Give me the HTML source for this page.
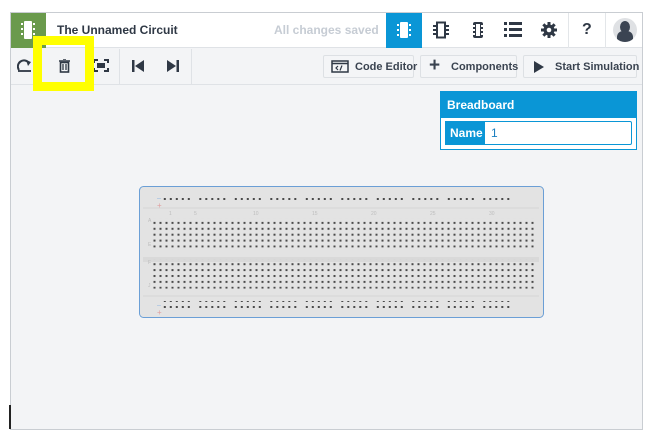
<!DOCTYPE html>
<html><head><style>
*{margin:0;padding:0;box-sizing:border-box}
body{width:655px;height:440px;background:#fff;position:relative;overflow:hidden;font-family:"Liberation Sans",sans-serif}
.abs{position:absolute;white-space:nowrap}
.btn{position:absolute;top:55px;height:23px;border:1px solid #dde0e4;border-radius:2px;background:#f4f5f7;font-size:11px;font-weight:bold;color:#3a4350;line-height:21px;white-space:nowrap}
</style></head><body>
<div class="abs" style="left:10px;top:12px;width:633px;height:418px;border:1px solid #c9cdd2;background:#f3f4f6"></div>
<div class="abs" style="left:11px;top:13px;width:631px;height:35px;background:#fff;border-bottom:1px solid #dfe2e6"></div>
<div class="abs" style="left:11px;top:13px;width:35px;height:35px;background:#6a9a4c"></div>
<svg class="abs" style="left:21px;top:20px" width="14" height="20"><rect x="3" y="1" width="8" height="18" rx="1" fill="#fff"/><g fill="#fff"><rect x="0" y="3" width="2" height="2"/><rect x="0" y="8" width="2" height="2"/><rect x="0" y="13" width="2" height="2"/><rect x="12" y="3" width="2" height="2"/><rect x="12" y="8" width="2" height="2"/><rect x="12" y="13" width="2" height="2"/></g></svg>
<div class="abs" style="left:57px;top:23px;font-size:12px;font-weight:bold;color:#2f3845">The Unnamed Circuit</div>
<div class="abs" style="left:274px;top:23px;font-size:12px;font-weight:bold;color:#c6ccd4">All changes saved</div>
<div class="abs" style="left:386px;top:13px;width:36px;height:35px;background:#0a96d6"></div>
<svg class="abs" style="left:397px;top:21px" width="14" height="18"><rect x="3" y="1" width="8" height="16" rx="1" fill="#fff"/><g fill="#fff"><rect x="0" y="3" width="2" height="2"/><rect x="0" y="8" width="2" height="2"/><rect x="0" y="13" width="2" height="2"/><rect x="12" y="3" width="2" height="2"/><rect x="12" y="8" width="2" height="2"/><rect x="12" y="13" width="2" height="2"/></g></svg>
<svg class="abs" style="left:433px;top:21px" width="16" height="18"><rect x="4" y="1.5" width="8" height="15" fill="none" stroke="#2f3845" stroke-width="2"/><g stroke="#2f3845" stroke-width="2"><path d="M0 5h4M0 9h4M0 13h4M12 5h4M12 9h4M12 13h4"/></g></svg>
<svg class="abs" style="left:470px;top:21px" width="16" height="18"><rect x="3" y="1" width="10" height="16" rx="2" fill="#2f3845"/><g fill="#fff"><rect x="3" y="4" width="2" height="2"/><rect x="3" y="8" width="2" height="2"/><rect x="3" y="12" width="2" height="2"/><rect x="11" y="4" width="2" height="2"/><rect x="11" y="8" width="2" height="2"/><rect x="11" y="12" width="2" height="2"/></g><rect x="6" y="3" width="4" height="12" fill="#fff"/></svg>
<svg class="abs" style="left:504px;top:22px" width="18" height="15" fill="#2f3845"><rect x="0" y="0" width="3" height="3"/><rect x="5" y="0" width="13" height="3"/><rect x="0" y="6" width="3" height="3"/><rect x="5" y="6" width="13" height="3"/><rect x="0" y="12" width="3" height="3"/><rect x="5" y="12" width="13" height="3"/></svg>
<svg class="abs" style="left:541px;top:22px" width="16" height="16" viewBox="0 0 16 16"><g fill="#2f3845"><circle cx="8" cy="8" r="5.5"/><rect x="6.5" y="0" width="3" height="16"/><rect x="0" y="6.5" width="16" height="3"/><rect x="6.5" y="0" width="3" height="16" transform="rotate(45 8 8)"/><rect x="6.5" y="0" width="3" height="16" transform="rotate(-45 8 8)"/></g><circle cx="8" cy="8" r="2.3" fill="#fff"/></svg>
<div class="abs" style="left:568px;top:13px;width:1px;height:35px;background:#e3e6e9"></div>
<div class="abs" style="left:582px;top:21px;font-size:16px;font-weight:bold;color:#2f3845">?</div>
<div class="abs" style="left:605px;top:13px;width:1px;height:35px;background:#e3e6e9"></div>
<div class="abs" style="left:613px;top:18px;width:24px;height:24px;border-radius:50%;background:#dfe1e4;overflow:hidden"><div class="abs" style="left:7px;top:3px;width:10px;height:12px;border-radius:50%;background:#3b4452"></div><div class="abs" style="left:4px;top:13px;width:16px;height:14px;border-radius:6px 6px 0 0;background:#3b4452"></div></div>
<div class="abs" style="left:11px;top:84px;width:631px;height:1px;background:#dfe2e6"></div>
<div class="abs" style="left:119px;top:49px;width:1px;height:35px;background:#dfe2e6"></div>
<div class="abs" style="left:191px;top:49px;width:1px;height:35px;background:#dfe2e6"></div>
<svg class="abs" style="left:17px;top:59px" width="15" height="13"><path d="M2 11A6 6 0 0 1 12 4" fill="none" stroke="#2f3845" stroke-width="2"/><path d="M9 1l5 2-3 4z" fill="#2f3845"/><path d="M1 12h13" stroke="#2f3845" stroke-width="1.8"/></svg>
<svg class="abs" style="left:59px;top:59px" width="11" height="14"><path d="M0 2h11M4 0h3" stroke="#2f3845" stroke-width="1.6"/><rect x="1.5" y="3.5" width="8" height="9.5" fill="none" stroke="#2f3845" stroke-width="1.6"/><path d="M4 5v6M7 5v6" stroke="#2f3845" stroke-width="1.3"/></svg>
<svg class="abs" style="left:93px;top:59px" width="16" height="13"><path d="M1 4V1h4M11 1h4v3M15 9v3h-4M5 12H1V9" fill="none" stroke="#2f3845" stroke-width="2"/><rect x="4" y="4" width="8" height="5" fill="#2f3845"/></svg>
<svg class="abs" style="left:132px;top:60px" width="12" height="12" fill="#2f3845"><rect x="0" y="0" width="2.5" height="12"/><path d="M12 0v12L3 6z"/></svg>
<svg class="abs" style="left:167px;top:60px" width="12" height="12" fill="#2f3845"><rect x="9.5" y="0" width="2.5" height="12"/><path d="M0 0v12l9-6z"/></svg>
<div class="btn" style="left:323px;width:91px"><svg style="position:absolute;left:7px;top:4px" width="18" height="13"><rect x="1" y="1" width="16" height="11" fill="none" stroke="#2f3845" stroke-width="1.5"/><path d="M1 3.5h16" stroke="#2f3845" stroke-width="1.5"/><path d="M7 6l-2 2 2 2M11 5.5l-2 5" fill="none" stroke="#2f3845" stroke-width="1.2"/></svg><span style="position:absolute;left:31px;top:1px">Code Editor</span></div>
<div class="btn" style="left:420px;width:97px"><span style="position:absolute;left:8px;top:-1px;font-size:19px">+</span><span style="position:absolute;left:30px;top:1px">Components</span></div>
<div class="btn" style="left:523px;width:114px"><svg style="position:absolute;left:10px;top:5px" width="10" height="12"><path d="M0 0v12l10-6z" fill="#2f3845"/></svg><span style="position:absolute;left:31px;top:1px">Start Simulation</span></div>
<div class="abs" style="left:440px;top:91px;width:197px;height:59px;border:1px solid #0a96d6;background:#fff"></div>
<div class="abs" style="left:440px;top:91px;width:197px;height:27px;background:#0a96d6;color:#fff;font-size:12px;font-weight:bold;padding:7px 0 0 7px">Breadboard</div>
<div class="abs" style="left:445px;top:121px;width:187px;height:24px;border:1px solid #0a96d6;border-radius:2px;background:#fff"></div>
<div class="abs" style="left:445px;top:121px;width:40px;height:24px;background:#0a96d6;color:#fff;font-size:12px;font-weight:bold;padding:5px 0 0 5px">Name</div>
<div class="abs" style="left:491px;top:126px;font-size:12px;color:#1a7fc0">1</div>
<svg class="abs" style="left:139px;top:186px" width="405" height="132">
<defs>
<pattern id="h" x="14" y="0" width="6" height="5.9" patternUnits="userSpaceOnUse"><rect x="0.5" y="0.5" width="2" height="2" fill="#4a4a4a"/></pattern>
<pattern id="r" x="24.8" y="0" width="35.5" height="6" patternUnits="userSpaceOnUse"><g fill="#4a4a4a"><rect x="0" y="0" width="2" height="2"/><rect x="6" y="0" width="2" height="2"/><rect x="12" y="0" width="2" height="2"/><rect x="18" y="0" width="2" height="2"/><rect x="24" y="0" width="2" height="2"/></g></pattern>
</defs>
<rect x="0.5" y="0.5" width="404" height="131" rx="4" fill="#e3e3e3" stroke="#6b9fd6"/>
<path d="M4 22H400M4 110H400" stroke="#d6d6d6"/>
<rect x="4" y="71" width="396" height="5" fill="#d9d9d9"/>
<rect x="24" y="8" width="355" height="8.2" fill="url(#r)"/>
<rect x="14" y="32.4" width="383" height="29" fill="url(#h)"/>
<rect x="14" y="73.6" width="383" height="29" fill="url(#h)"/>
<rect x="24" y="115" width="355" height="8.2" fill="url(#r)"/>
<g font-size="5" fill="#bdbdbd"><text x="9" y="36">A</text><text x="9" y="60">E</text><text x="9" y="78">F</text><text x="9" y="101">J</text><text x="30" y="29">1</text><text x="55" y="29">5</text><text x="114" y="29">10</text><text x="173" y="29">15</text><text x="232" y="29">20</text><text x="291" y="29">25</text><text x="350" y="29">30</text></g>
<text x="18" y="14" font-size="7" fill="#8fb6e0">–</text><text x="18" y="22" font-size="8" fill="#e0a0a0">+</text>
<text x="18" y="121" font-size="7" fill="#8fb6e0">–</text><text x="18" y="129" font-size="8" fill="#e0a0a0">+</text>
</svg>
<div class="abs" style="left:33px;top:36px;width:61px;height:55px;border:9px solid #ffff00"></div>
<div class="abs" style="left:9px;top:405px;width:2px;height:24px;background:#222"></div>
</body></html>
